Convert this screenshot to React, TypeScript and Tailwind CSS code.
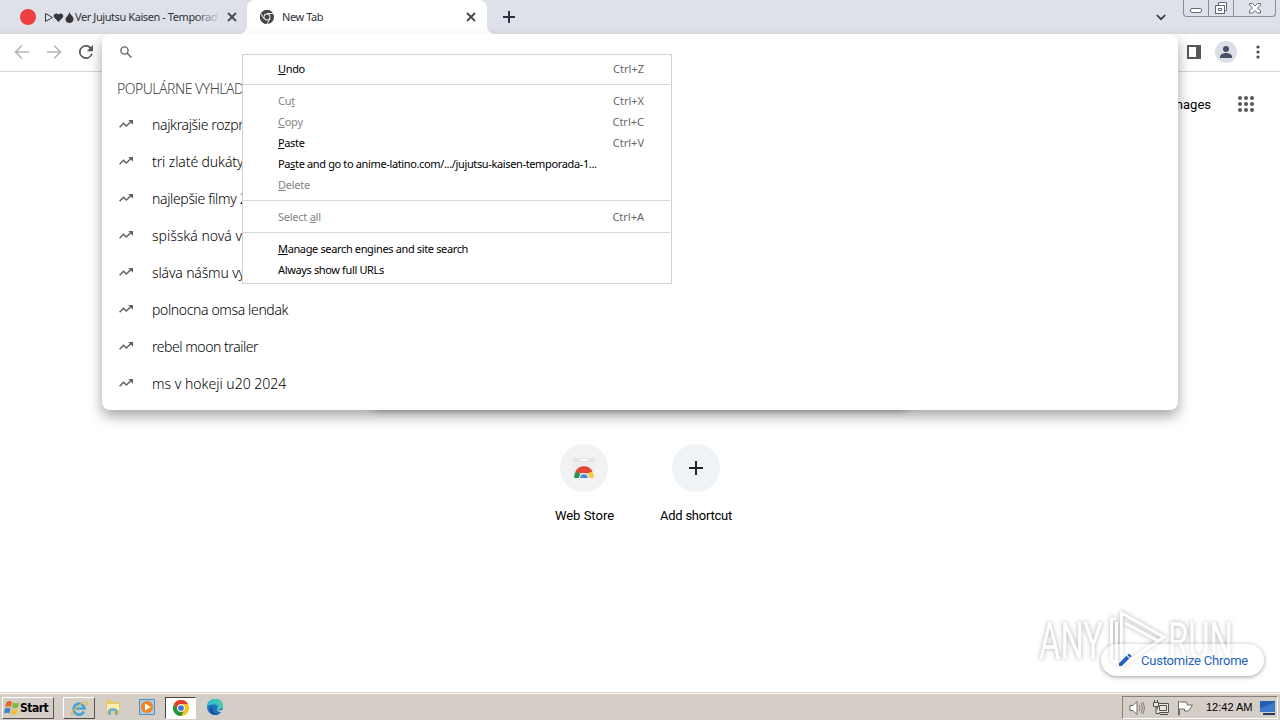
import React from 'react';

const searches = [
  { text: 'najkrajšie rozpr', className: 'tracking-[-0.35px]' },
  { text: 'tri zlaté dukáty', className: 'tracking-[-0.1px]' },
  { text: 'najlepšie filmy 2', className: 'tracking-[-0.35px]' },
  { text: 'spišská nová v', className: 'tracking-[0px]' },
  { text: 'sláva nášmu vy', className: 'tracking-[-0.15px]' },
  { text: 'polnocna omsa lendak', className: 'tracking-[-0.36px]' },
  { text: 'rebel moon trailer', className: 'tracking-[-0.45px]' },
  { text: 'ms v hokeji u20 2024', className: 'tracking-[0px]' },
];

interface MenuItemProps {
  before?: string;
  mnemonic?: string;
  after: string;
  shortcut?: string;
  disabled?: boolean;
}

const MenuItem = ({ before = '', mnemonic = '', after, shortcut, disabled }: MenuItemProps) => (
  <div className={`flex h-[21px] items-center justify-between pr-[27px] pl-[35px] whitespace-nowrap ${disabled ? 'text-[#858585]' : 'text-black'}`}>
    <span className={disabled ? 'tracking-[-0.25px]' : 'tracking-[-0.36px]'}>
      {before}
      <span className="underline underline-offset-1">{mnemonic}</span>
      {after}
    </span>
    {shortcut && <span className="text-[#686868]">{shortcut}</span>}
  </div>
);

const Separator = () => <div className="mt-1 mr-px mb-1.5 h-px bg-[#d8d8d8]" />;

const CloseIcon = () => (
  <svg className="h-2.5 w-2.5 shrink-0" viewBox="0 0 10 10" stroke="#45474b" strokeWidth="1.8">
    <path d="M1 1l8 8M9 1l-8 8" />
  </svg>
);

const ChromeIcon = ({ className = '', mono = false }: { className?: string; mono?: boolean }) => (
  <svg className={className} viewBox="0 0 24 24">
    <circle cx="12" cy="12" r="12" fill={mono ? '#45474b' : '#fbc116'} />
    <path d="M1.6 6A12 12 0 0 1 22.4 6H12a6 6 0 0 0-5.2 9z" fill={mono ? '#45474b' : '#e33b2e'} />
    <path d="M1.6 6A12 12 0 0 0 12 24l5.2-9a6 6 0 0 1-10.4 0z" fill={mono ? '#45474b' : '#229342'} />
    {mono && <path d="M12 6h11M6.8 15L1.4 6M17.2 15L12 24" stroke="#fff" strokeWidth="1.6" />}
    <circle cx="12" cy="12" r="5.8" fill="#fff" />
    <circle cx="12" cy="12" r="4.3" fill={mono ? '#45474b' : '#3874e0'} />
  </svg>
);

const TabStrip = () => (
  <header className="flex h-[34px] items-center bg-gradient-to-b from-[#dee1e9] from-80% to-[#d6d8dc] font-['Noto_Sans','Liberation_Sans',sans-serif] text-[11px] tracking-[-0.42px] text-[#303236]">
    <div className="flex h-full w-[247px] items-center pl-5">
      <span className="h-4 w-4 shrink-0 rounded-full bg-[#ed3f3d]" />
      <div className="relative ml-2 flex w-[176px] items-center whitespace-nowrap">
        <svg className="h-[11px] w-[31px] shrink-0" viewBox="0 0 31 11">
          <path d="M1.500 1.500v8L8.500 5.500z" fill="none" stroke="#35373b" />
          <path d="M14.500 10L10.200 5.500C8.500 3.500 11.500-.5 14.500 2.500C17.500-.5 20.500 3.500 18.800 5.500z" fill="#35373b" />
          <path d="M25.500 0c.5 3 4 4 4 7.200C29.500 9.500 27.700 11 25.500 11s-4-1.500-4-3.800C21.500 5 24.500 4 25.500 0z" fill="#35373b" />
        </svg>
        <span>Ver Jujutsu Kaisen - Temporad</span>
        <span className="absolute right-0 h-full w-6 bg-gradient-to-r from-transparent to-[#dee1e9]" />
      </div>
      <span className="ml-[7px]"><CloseIcon /></span>
    </div>
    <div className="relative flex h-full w-60 items-center rounded-t-lg bg-gradient-to-b from-white from-70% to-[#fafafa] pl-[13px]">
      <svg className="absolute bottom-0 -left-2 h-2 w-2" viewBox="0 0 8 8"><path d="M8 0v8H0a8 8 0 0 0 8-8" fill="#fcfcfc" /></svg>
      <svg className="absolute -right-2 bottom-0 h-2 w-2" viewBox="0 0 8 8"><path d="M0 0v8h8a8 8 0 0 1-8-8" fill="#fcfcfc" /></svg>
      <ChromeIcon mono className="h-3.5 w-3.5" />
      <span className="ml-2 w-[184px]">New Tab</span>
      <CloseIcon />
    </div>
    <svg className="ml-4 h-3 w-3" viewBox="0 0 12 12" stroke="#2d3040" strokeWidth="2"><path d="M6 0v12M0 6h12" /></svg>
    <svg className="ml-[641px] h-[7px] w-[10px]" viewBox="0 0 10 7" fill="none" stroke="#34363b" strokeWidth="1.700"><path d="M.8 1L5 5.200 9.200 1" /></svg>
    <div className="ml-[17px] flex h-[17px] w-[93px] self-start rounded-b border border-t-0 border-[#8a8c93]">
      <svg className="h-[17px] w-[91px]" viewBox="0 0 91 17" fill="none" stroke="#65686e">
        <path d="M24.500 0v16M49.500 0v16" stroke="#8a8c93" />
        <rect x="6.500" y="8.500" width="11" height="4" rx="1.500" fill="#fff" />
        <path d="M34.500 2.500h8v8h-2v3h-9v-8h3z" fill="#fff" />
        <path d="M31.500 5.500h9v8h-9zM34.500 8.500h3v2h-3z" />
        <path d="M65.500 3.500h3l2.500 2.500 2.500-2.500h3v1.500l-3 3 3 3v2h-3l-2.500-2.500-2.500 2.500h-3v-2l3-3-3-3z" fill="#fff" />
      </svg>
    </div>
  </header>
);

const Toolbar = () => (
  <div className="flex h-[38px] items-center border-b border-[#d5d5d5] bg-white pb-px">
    <svg className="ml-3.5 h-4 w-4" viewBox="0 0 16 16" fill="none" stroke="#b5b5b5" strokeWidth="1.600"><path d="M15 8H2M8 1.500L1.500 8 8 14.500" /></svg>
    <svg className="ml-4 h-4 w-4" viewBox="0 0 16 16" fill="none" stroke="#b5b5b5" strokeWidth="1.600"><path d="M1 8h13M8 1.500L14.500 8 8 14.500" /></svg>
    <svg className="mr-px ml-[17px] h-[14px] w-[14px]" viewBox="4 4 16 16" fill="#55575a"><path d="M17.650 6.350A8 8 0 1 0 19.730 14h-2.080A6 6 0 1 1 12 6c1.660 0 3.140.690 4.220 1.780L13 11h7V4z" /></svg>
    <svg className="ml-[1093px] h-[14px] w-[14px]" viewBox="0 0 14 14"><path d="M1 1h12v12H1z" fill="#fff" stroke="#5a5658" strokeWidth="2" /><path d="M9 0h5v14H9z" fill="#5a5658" /></svg>
    <svg className="ml-[14px] h-[22px] w-[22px]" viewBox="0 0 22 22"><circle cx="11" cy="11" r="11" fill="#dce0e6" /><circle cx="11" cy="8" r="3" fill="#465068" /><path d="M5 17v-1.500C5 13 9 12 11 12s6 1 6 3.500V17z" fill="#465068" /></svg>
    <svg className="ml-[19px] h-[14px] w-1" viewBox="0 0 4 14" fill="#4b4b4b"><circle cx="2" cy="2" r="1.600" /><circle cx="2" cy="7" r="1.600" /><circle cx="2" cy="12" r="1.600" /></svg>
  </div>
);

const OmniboxPopup = () => (
  <div className="absolute left-[102px] h-[376px] w-[1076px] rounded-lg bg-white font-['Noto_Sans','Liberation_Sans',sans-serif] text-sm text-[#222] shadow-[0_6px_14px_rgba(0,0,0,0.36)]">
    <div className="flex h-9 items-center pl-[18px]">
      <svg className="h-3 w-3" viewBox="0 0 12 12" fill="none" stroke="#636363" strokeWidth="1.400"><circle cx="4.500" cy="4.500" r="3.600" /><path d="M7.200 7.200l4.200 4.200" /></svg>
    </div>
    <div className="flex h-9 items-center pt-px pl-[15px] font-light tracking-[-0.5px] text-[#444]">POPULÁRNE VYHĽAD</div>
    {searches.map((search) => (
      <div key={search.text} className="flex h-[37px] items-center pl-[17px] font-light text-black">
        <svg className="mb-0.5 h-2 w-[14px]" viewBox="0 0 14 8"><path d="M.6 7.200L4.500 3.300 7.300 6l5-4.700" fill="none" stroke="#5f6265" strokeWidth="1.500" /><path d="M9.300 0H14v4.700z" fill="#5f6265" /></svg>
        <span className={`ml-[19px] whitespace-nowrap ${search.className}`}>{search.text}</span>
      </div>
    ))}
  </div>
);

const ContextMenu = () => (
  <div className="absolute top-[54px] left-[242px] h-[230px] w-[430px] border border-[#d2d2d2] bg-white pt-1 font-['Noto_Sans','Liberation_Sans',sans-serif] text-[11px]">
    <MenuItem mnemonic="U" after="ndo" shortcut="Ctrl+Z" />
    <Separator />
    <MenuItem before="Cu" mnemonic="t" after="" shortcut="Ctrl+X" disabled />
    <MenuItem mnemonic="C" after="opy" shortcut="Ctrl+C" disabled />
    <MenuItem mnemonic="P" after="aste" shortcut="Ctrl+V" />
    <MenuItem before="Pa" mnemonic="s" after="te and go to anime-latino.com/.../jujutsu-kaisen-temporada-1..." />
    <MenuItem mnemonic="D" after="elete" disabled />
    <Separator />
    <MenuItem before="Select " mnemonic="a" after="ll" shortcut="Ctrl+A" disabled />
    <Separator />
    <MenuItem mnemonic="M" after="anage search engines and site search" />
    <MenuItem after="Always show full URLs" />
  </div>
);

const Watermark = () => (
  <svg className="absolute right-[42px] bottom-4 h-[72px] w-[204px] font-['Roboto','Liberation_Sans',sans-serif] drop-shadow-[0_0_2px_rgba(0,0,0,0.32)]" viewBox="0 0 204 72">
    <g fill="#fff" fontSize="51" fontWeight="400">
      <text x="5" y="55" textLength="64" lengthAdjust="spacingAndGlyphs">ANY</text>
      <text x="134" y="55" textLength="65" lengthAdjust="spacingAndGlyphs">RUN</text>
    </g>
    <path d="M82 15H77.500V56l5 3V18M87.500 62V9L130 33 89 61M91 19l33 18" fill="none" stroke="#fff" strokeWidth="3" />
  </svg>
);

const NewTabPage = () => (
  <main className="relative flex h-[620px] flex-col items-center bg-white font-['Roboto','Liberation_Sans',sans-serif] text-[13px] text-black">
    <div className="flex h-16 w-full items-center justify-end pr-[26px]">
      <span className="mt-px mr-[27px]">Images</span>
      <svg className="h-4 w-4" viewBox="0 0 16 16" fill="#56585c">
        {[2, 8, 14].map((y) => [2, 8, 14].map((x) => <circle key={`${x}-${y}`} cx={x} cy={y} r="2" />))}
      </svg>
    </div>
    <div className="mt-[229px] h-11 w-[561px] rounded-[22px] bg-white shadow-[0_2px_6px_rgba(0,0,0,0.3)]" />
    <div className="mt-[35px] flex">
      <div className="flex w-28 flex-col items-center">
        <div className="flex h-12 w-12 items-center justify-center rounded-full bg-[#f1f2f3]">
          <svg className="h-6 w-6" viewBox="0 0 24 24">
            <path d="M1 2h22v20H1z" fill="#ededed" /><path d="M1 2h22v4H1z" fill="#e2e3e4" /><path d="M8 4h8" stroke="#f6f6f6" strokeWidth="2" />
            <path d="M2.500 22a9.500 9.500 0 0 1 2.500-8l6 8z" fill="#2c9149" /><path d="M21.500 22a9.500 9.500 0 0 0-2.500-8l-6 8z" fill="#f7cb3c" />
            <path d="M3.500 15.500a9.500 9.500 0 0 1 17 0l-5.500 2H9z" fill="#e34435" />
            <path d="M7 22a5 5 0 0 1 10 0z" fill="#f5f5f5" /><path d="M8.200 22a3.800 3.800 0 0 1 7.600 0z" fill="#4788df" />
          </svg>
        </div>
        <span className="mt-3.5 pl-px">Web Store</span>
      </div>
      <div className="flex w-28 flex-col items-center">
        <div className="flex h-12 w-12 items-center justify-center rounded-full bg-[#f0f3f5]">
          <svg className="h-3.5 w-3.5" viewBox="0 0 14 14" stroke="#202124" strokeWidth="2"><path d="M7 0v14M0 7h14" /></svg>
        </div>
        <span className="mt-3.5 tracking-[-0.22px]">Add shortcut</span>
      </div>
    </div>
    <Watermark />
    <div className="absolute right-4 bottom-4 flex h-8 w-[163px] items-center rounded-full bg-white/50 pl-[17px] text-[#2564b8] shadow-[0_1px_4px_rgba(0,0,0,0.4)]">
      <svg className="h-3.5 w-3.5" viewBox="0 0 14 14" fill="#2463bd"><path d="M1 13v-2.800l7.500-7.500 2.800 2.800L3.800 13zM9.300 1.900l1-1q.6-.5 1.200 0l1.600 1.600q.5.600 0 1.200l-1 1z" /></svg>
      <span className="mt-0.5 ml-[9px] tracking-[-0.22px] whitespace-nowrap">Customize Chrome</span>
    </div>
  </main>
);

const Taskbar = () => (
  <footer className="flex h-7 items-center border-t border-[#d5d1ca] bg-[#d5cec6] pl-0.5 shadow-[inset_0_1px_#fff]">
    <div className="mt-0.5 flex h-[22px] w-[52px] items-center border border-t-white border-r-[#56524d] border-b-[#56524d] border-l-white pl-px font-['DejaVu_Sans_Condensed','DejaVu_Sans',sans-serif] text-[12px] font-bold tracking-[-0.5px] text-black">
      <svg className="h-4 w-4 shrink-0" viewBox="0 0 16 16"><path d="M2.500 2q3-2 5.500 0L7 7Q4.500 5.500 1 7z" fill="#e4692d" /><path d="M9 2.500q3 1.500 6 0L14 7.500q-3 1.500-6 0z" fill="#83b83e" /><path d="M1 8.500q3-1.500 5.500 0L5.500 13.500q-2.500-1.500-5.500 0z" fill="#3a84c8" /><path d="M7.700 9q3 1.500 6 0l-1 5q-3 1.500-6 0z" fill="#f5bd37" /></svg>
      <span>Start</span>
    </div>
    <div className="mt-0.5 ml-[9px] flex h-[22px] w-8 items-center justify-center border border-t-white border-r-[#56524d] border-b-[#56524d] border-l-white">
      <svg className="h-[18px] w-[18px]" viewBox="0 0 18 18" fill="none"><path d="M14 12.500A5.500 5.500 0 1 1 14.500 9.500H5" stroke="#43a5dc" strokeWidth="2.700" /><path d="M3 15c-2 2-3-1 3-6 5-5 11-8 11-5 0 1-.7 2-1.500 3" stroke="#e7b945" strokeWidth="1.300" /></svg>
    </div>
    <svg className="ml-[9px] h-[18px] w-[18px]" viewBox="0 0 18 18"><path d="M2 2h5l1 2h8v12H2z" fill="#e9cb67" /><path d="M3 6h12v7H3z" fill="#faeeb2" /><path d="M4 17v-5q5-4 10 0v5h-3v-4H7v4z" fill="#6eafd2" /></svg>
    <svg className="ml-[17px] h-4 w-4" viewBox="0 0 16 16"><path d="M.5.5h15v15H.5z" fill="#a8cce7" stroke="#5b8dbb" /><circle cx="8" cy="8" r="6" fill="#ef8420" /><path d="M6 4.500v7L12 8z" fill="#fff" /></svg>
    <div className="mt-0.5 ml-[10px] flex h-[22px] w-[31px] items-center justify-center border border-t-[#45423e] border-r-white border-b-white border-l-[#45423e] bg-white">
      <ChromeIcon className="h-4 w-4" />
    </div>
    <svg className="ml-[11px] h-4 w-4" viewBox="0 0 16 16">
      <circle cx="8" cy="8" r="8" fill="#1b6fbd" />
      <path d="M0 8C0-2.500 16-3 16 7c0 3-3.500 4-6 3 1.500-2 .5-4.500-2.500-4.500C4 5.500 1 6 0 8z" fill="#35bfd0" />
      <path d="M6 1.200C12-.5 16 3 16 7c0 3-3.500 4-6 3 2-2 2-6-4-8.800z" fill="#56cd93" fillOpacity=".6" />
      <path d="M5 9c0 4 3 6.500 7 6q-3 1.500-6 .5C2.500 14 2 9 6 7q-1 1-1 2z" fill="#154f92" />
      <path d="M9.500 10Q12 12.500 16 10.500L15 13Q10.500 13.500 9.500 10z" fill="#d5cec6" />
    </svg>
    <div className="mt-0.5 mr-0.5 ml-auto flex h-[23px] w-[156px] items-center border border-t-[#85807a] border-r-white border-b-white border-l-[#85807a] pl-1.5 font-['Liberation_Sans',sans-serif] text-[11px] text-black">
      <svg className="h-4 w-4" viewBox="0 0 16 16" fill="#fff" stroke="#6d6a66"><path d="M1 5.500h3l4-4v13l-4-4H1z" /><path d="M10 5q2 3 0 6M12 3q3 5 0 10M14 2q3 6 0 12" fill="none" strokeWidth=".8" /></svg>
      <svg className="ml-2 h-4 w-4" viewBox="0 0 16 16" fill="#e9e6e0" stroke="#55534f"><path d="M4.500 3.500h11v9h-11zM6.500 5.500h7v5h-7zM7 14.500h8" /><path d="M.5 2.500h5v4h-5zM1.500 0v3M4.500 0v3M3 7v6.500h4" /></svg>
      <svg className="ml-2 h-4 w-4" viewBox="0 0 16 16" fill="#fff" stroke="#6d6a66"><path d="M1.500 1v14h1V9h5v2h4l4-6h-5l-1-3h-7" /></svg>
      <span className="ml-[13px] w-[47px] whitespace-nowrap">12:42 AM</span>
      <svg className="ml-[7px] h-4 w-4" viewBox="0 0 16 16"><path d="M0 1h15v11H0z" fill="#245caf" /><path d="M0 8L15 2v10H0z" fill="#3b7acb" /><path d="M3 13h12v2H3z" fill="#263c5d" /></svg>
    </div>
  </footer>
);

const App = () => {
  return (
    <div className="relative h-[720px] w-[1280px] overflow-hidden bg-white">
      <TabStrip />
      <Toolbar />
      <NewTabPage />
      <Taskbar />
      {/* Clips the popup shadow below the tab strip */}
      <div className="absolute top-[34px] left-0 h-[500px] w-full overflow-hidden">
        <OmniboxPopup />
      </div>
      <ContextMenu />
    </div>
  );
};

export default App;
